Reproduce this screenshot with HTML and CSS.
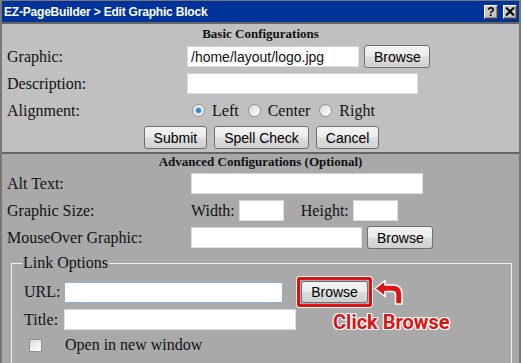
FILE: index.html
```html
<!DOCTYPE html>
<html>
<head>
  <title>EZ-PageBuilder - Edit Graphic Block</title>
  <link rel="stylesheet" href="styles.css">
</head>
<body>
  <div class="window">
    <div class="titlebar">
      <span class="title">EZ-PageBuilder &gt; Edit Graphic Block</span>
      <span class="tbtn">?</span>
      <span class="tbtn">
        <svg width="10" height="9" viewBox="0 0 10 9"><path d="M1 0.5 L9 8.5 M9 0.5 L1 8.5" stroke="#000" stroke-width="2"/></svg>
      </span>
    </div>

    <!-- basic settings -->
    <div class="basic">
      <div class="heading">Basic Configurations</div>
      <div class="row">
        <span class="label">Graphic:</span>
        <input type="text" class="field graphic" value="/home/layout/logo.jpg">
        <button class="btn browse">Browse</button>
      </div>
      <div class="row">
        <span class="label">Description:</span>
        <input type="text" class="field desc">
      </div>
      <div class="row">
        <span class="label">Alignment:</span>
        <input type="radio" name="align" class="radio" checked><span class="opt">Left</span>
        <input type="radio" name="align" class="radio"><span class="opt">Center</span>
        <input type="radio" name="align" class="radio"><span class="opt">Right</span>
      </div>
      <div class="row buttons">
        <button class="btn">Submit</button>
        <button class="btn">Spell Check</button>
        <button class="btn">Cancel</button>
      </div>
    </div>

    <!-- advanced settings -->
    <div class="advanced">
      <div class="heading">Advanced Configurations (Optional)</div>
      <div class="row">
        <span class="label">Alt Text:</span>
        <input type="text" class="field alt">
      </div>
      <div class="row">
        <span class="label">Graphic Size:</span>
        <span class="small-label">Width:</span>
        <input type="text" class="field size">
        <span class="small-label height-label">Height:</span>
        <input type="text" class="field size">
      </div>
      <div class="row">
        <span class="label">MouseOver Graphic:</span>
        <input type="text" class="field mouseover">
        <button class="btn browse">Browse</button>
      </div>

      <fieldset class="links">
        <legend>Link Options</legend>
        <div class="lrow url-row">
          <span class="llabel">URL:</span>
          <input type="text" class="field url">
          <span class="highlight"><button class="btn">Browse</button></span>
          <svg class="arrow" width="33" height="27" viewBox="0 0 33 27">
            <path d="M2 9.5 L12 1.5 L12 6 L20 6 Q29 6 29 15 L29 25 L22.5 25 L22.5 15.5 Q22.5 12.5 19.5 12.5 L12 12.5 L12 17.5 Z" fill="#dc1414" stroke="#fff" stroke-width="1.6" stroke-linejoin="round"/>
          </svg>
          <span class="note">Click Browse</span>
        </div>
        <div class="lrow title-row">
          <span class="llabel">Title:</span>
          <input type="text" class="field ltitle">
        </div>
        <div class="lrow check-row">
          <input type="checkbox" class="check">
          <span>Open in new window</span>
        </div>
      </fieldset>
    </div>
  </div>
</body>
</html>
```

FILE: styles.css
```css
body {
  margin: 0;
  background: #fff;
  font-family: "Liberation Serif", serif;
  font-size: 16px;
  color: #111;
  overflow: hidden;
}

.window {
  width: 517px;
  border: 2px solid #777;
  border-top-width: 1px;
  background: #c0c0c0;
}

/* title bar */
.titlebar {
  height: 21px;
  background: #003399;
  border-bottom: 2px solid #666;
  display: flex;
  align-items: center;
  padding: 0 2px 0 2px;
}
.title {
  flex: 1;
  color: #fff;
  font: bold 12px "Liberation Sans", sans-serif;
  letter-spacing: -0.2px;
}
.tbtn {
  width: 12px;
  height: 12px;
  margin-left: 5px;
  background: #c8c8c8;
  border: 1px solid;
  border-color: #fff #404040 #404040 #fff;
  box-shadow: inset -1px -1px 0 #888;
  display: flex;
  align-items: center;
  justify-content: center;
  font: bold 12px "Liberation Sans", sans-serif;
  color: #000;
}

.heading {
  text-align: center;
  font-weight: bold;
  font-size: 13px;
  line-height: 16px;
}

.basic {
  padding: 2px 5px 4px;
}
.basic .heading {
  margin-bottom: 4px;
}

.row {
  display: flex;
  align-items: center;
  height: 21px;
  margin-bottom: 6px;
}
.basic .row:last-child {
  margin-bottom: 0;
}
.label {
  width: 180px;
  flex: none;
}
.advanced .label {
  width: 184px;
}

.field {
  box-sizing: border-box;
  height: 21px;
  border: 1px solid #dedede;
  border-top-color: #d2d2d2;
  background: #fff;
  padding: 1px 3px;
  font: 14px "Liberation Sans", sans-serif;
  color: #111;
  margin: 0;
}
.graphic { width: 172px; }
.desc { width: 231px; }
.alt { width: 232px; }
.size { width: 45px; }
.mouseover { width: 171px; }
.url { width: 219px; border-color: #8cb2d6; }
.ltitle { width: 232px; }

.btn {
  box-sizing: border-box;
  height: 23px;
  padding: 0 9px;
  border: 1px solid #707070;
  border-radius: 3px;
  background: linear-gradient(#f4f4f4, #ebebeb 48%, #dcdcdc 52%, #d0d0d0);
  font: 14px "Liberation Sans", sans-serif;
  color: #000;
  margin: 0;
}
.browse {
  margin-left: 5px;
  width: 66px;
}

/* windows style radio and checkbox */
.radio,
.check {
  appearance: none;
  box-sizing: border-box;
  width: 13px;
  height: 13px;
  border: 1px solid #8e8f8f;
  background: linear-gradient(135deg, #d6d6d6, #f6f6f6 70%, #fff);
}
.radio {
  border-radius: 50%;
  margin: 0 7px 0 5px;
}
.radio:checked {
  background: radial-gradient(circle, #1a6fc8 0, #4ea3e8 2.5px, #e8e8e8 3.5px, #f8f8f8 6px);
}
.opt {
  margin-right: 4px;
}

.buttons {
  justify-content: center;
  gap: 7px;
  padding-left: 2px;
}

/* advanced section */
.advanced {
  background: #a9a9a9;
  border-top: 2px solid #666;
  padding: 0 5px 30px;
}
.advanced .heading {
  margin-bottom: 3px;
}
.small-label {
  margin-right: 4px;
}
.height-label {
  margin-left: 17px;
}

/* link options */
.links {
  margin: 1px 2px 0 4px;
  padding: 0 0 20px 12px;
  border: 1px solid #f2f2f2;
}
.links legend {
  padding: 0 1px;
  margin-left: -2px;
  line-height: 18px;
}
.lrow {
  display: flex;
  align-items: center;
}
.url-row {
  position: relative;
  height: 30px;
  margin-top: 5px;
}
.title-row {
  height: 21px;
  margin-top: 2px;
}
.check-row {
  height: 20px;
  margin-top: 5px;
}
.llabel {
  width: 40px;
}
.highlight {
  margin-left: 14px;
  padding: 1px;
  border: 3px solid #e01010;
  border-radius: 3px;
  box-shadow: 0 0 0 1px #fff;
  display: flex;
}
.highlight .btn {
  height: 22px;
  width: 67px;
}
.arrow {
  margin-left: 1px;
}
.note {
  position: absolute;
  left: 309px;
  top: 35px;
  font: bold 20px Roboto, sans-serif;
  line-height: 20px;
  color: #dc1414;
  text-shadow: 1px 0 0 #fff, -1px 0 0 #fff, 0 1px 0 #fff, 0 -1px 0 #fff,
    1px 1px 0 #fff, -1px -1px 0 #fff, 1px -1px 0 #fff, -1px 1px 0 #fff;
}
.check {
  margin: 0 23px 0 5px;
}
```
